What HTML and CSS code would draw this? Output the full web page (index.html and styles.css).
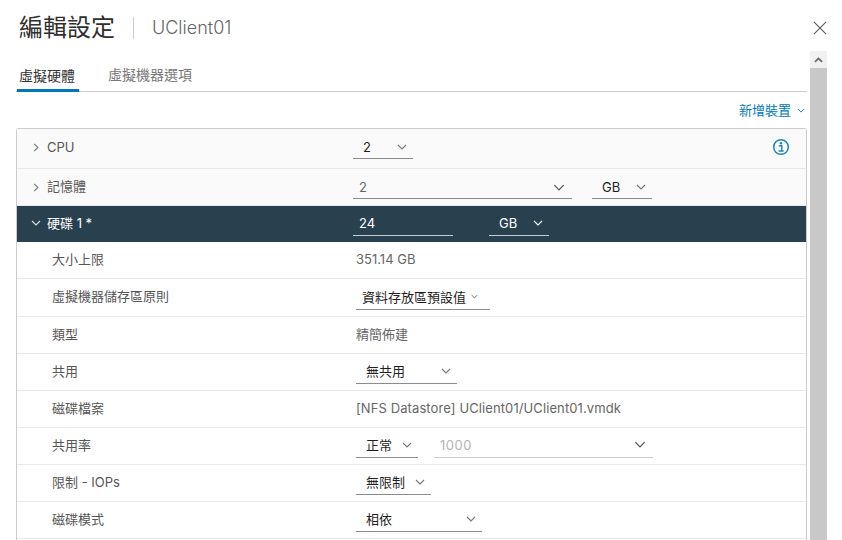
FILE: index.html
```html
<!DOCTYPE html>
<html lang="zh-Hant">
<head>
<meta charset="utf-8">
<title>編輯設定</title>
<link rel="stylesheet" href="styles.css">
</head>
<body>
<svg class="defs" width="0" height="0" aria-hidden="true">
  <symbol id="down" viewBox="0 0 10 6"><path d="M1 1l4 4 4-4" fill="none" stroke="currentColor" stroke-width="1.1"/></symbol>
  <symbol id="right" viewBox="0 0 6 10"><path d="M1 1l4 4-4 4" fill="none" stroke="currentColor" stroke-width="1.2"/></symbol>
</svg>
<div class="dialog">
  <main class="main">
    <header class="head">
      <h1 class="title">編輯設定</h1>
      <span class="subtitle">UClient01</span>
    </header>
    <nav class="tabs">
      <a class="tab active">虛擬硬體</a>
      <a class="tab">虛擬機器選項</a>
    </nav>
    <div class="add-row">
      <a class="add">新增裝置<svg class="chev-add"><use href="#down"/></svg></a>
    </div>
    <section class="table">
      <div class="row head-row first">
        <svg class="exp"><use href="#right"/></svg>
        <span class="hlabel">CPU</span>
        <div class="select w60"><span>2</span><svg class="chev"><use href="#down"/></svg></div>
        <svg class="info" viewBox="0 0 18 18">
          <circle cx="9" cy="9" r="7.3" fill="none" stroke="#1a86b8" stroke-width="1.5"/>
          <circle cx="9" cy="5.3" r="1.2" fill="#1a86b8"/>
          <path d="M6.8 7.8h3v5M6.6 13h5" fill="none" stroke="#1a86b8" stroke-width="1.4"/>
        </svg>
      </div>
      <div class="row head-row second">
        <svg class="exp"><use href="#right"/></svg>
        <span class="hlabel">記憶體</span>
        <div class="combo w219 raised"><span class="muted">2</span><svg class="chev big"><use href="#down"/></svg></div>
        <div class="select w60 gap20 raised"><span>GB</span><svg class="chev"><use href="#down"/></svg></div>
      </div>
      <div class="row dark-row">
        <svg class="exp-open"><use href="#down"/></svg>
        <span class="hlabel">硬碟 1 *</span>
        <div class="combo w100 light"><span>24</span></div>
        <div class="select w60 gap36 light"><span>GB</span><svg class="chev"><use href="#down"/></svg></div>
      </div>
      <div class="row sub"><span class="label">大小上限</span><span class="value">351.14 GB</span></div>
      <div class="row sub h38"><span class="label">虛擬機器儲存區原則</span>
        <div class="select w134 tight"><span>資料存放區預設值</span><svg class="chev small"><use href="#down"/></svg></div></div>
      <div class="row sub"><span class="label">類型</span><span class="value">精簡佈建</span></div>
      <div class="row sub"><span class="label">共用</span>
        <div class="select w101"><span>無共用</span><svg class="chev"><use href="#down"/></svg></div></div>
      <div class="row sub"><span class="label">磁碟檔案</span><span class="value path">[NFS Datastore] UClient01/UClient01.vmdk</span></div>
      <div class="row sub"><span class="label">共用率</span>
        <div class="select w62"><span>正常</span><svg class="chev"><use href="#down"/></svg></div>
        <div class="combo w219 gap16 disabled"><span class="num">1000</span><svg class="chev big"><use href="#down"/></svg></div></div>
      <div class="row sub"><span class="label">限制 - IOPs</span>
        <div class="select w75"><span>無限制</span><svg class="chev"><use href="#down"/></svg></div></div>
      <div class="row sub"><span class="label">磁碟模式</span>
        <div class="select w126"><span>相依</span><svg class="chev"><use href="#down"/></svg></div></div>
    </section>
  </main>
  <aside class="side">
    <svg class="close" viewBox="0 0 16 16"><path d="M1 1l14 14M15 1L1 15" fill="none" stroke="#565656" stroke-width="1.2"/></svg>
    <div class="scrollbar">
      <div class="sb-btn"><svg class="sb-up" viewBox="0 0 10 6"><path d="M1 5l4-3.6L9 5" fill="none" stroke="#6a6a6a" stroke-width="2"/></svg></div>
      <div class="sb-thumb"></div>
    </div>
  </aside>
</div>
</body>
</html>
```
FILE: styles.css
```css
* { box-sizing: border-box; }
html, body { margin: 0; height: 100%; overflow: hidden; background: #fff; }
body { font-family: Inter, "Noto Sans CJK TC", sans-serif; color: #565656; font-size: 13px; }
.defs { position: absolute; }
.dialog { display: flex; height: 540px; padding-left: 16px; }
.main { width: 791px; flex: none; }
.head { display: flex; align-items: center; height: 53px; padding: 2px 0 0 3px; }
.title { margin: 0; font-size: 24px; line-height: 32px; font-weight: 400; color: #2f2f2f; padding-right: 18px; border-right: 1px solid #ccc; height: 22px; display: flex; align-items: center; }
.subtitle { margin-left: 18px; font-size: 18px; font-weight: 300; color: #666; }
.tabs { display: flex; height: 39px; border-bottom: 1px solid #ccc; align-items: flex-end; padding-left: 1px; }
.tab { display: block; height: 25px; font-size: 14px; line-height: 18px; padding: 0 2px; color: #565656; }
.tab.active { width: 62px; border-bottom: 3px solid #0079b8; margin-bottom: -1px; color: #333; }
.tab + .tab { margin-left: 27px; color: #777; }
.add-row { display: flex; justify-content: flex-end; height: 36px; padding-top: 9px; }
.add { color: #0079b8; line-height: 18px; display: flex; align-items: center; height: 18px; }
.chev-add { width: 8px; height: 5px; margin: 0 2px 0 6px; color: #0079b8; }
.table { border: 1px solid #ccc; border-bottom: 0; border-radius: 3px 3px 0 0; height: 412px; }
.row { display: flex; align-items: center; border-bottom: 1px solid #e8e8e8; height: 37px; }
.head-row { background: #fafafa; padding-left: 16px; }
.head-row.first { height: 40px; }
.head-row.second { height: 37px; }
.dark-row { background: #29414f; color: #fff; height: 36px; padding-left: 14px; border-bottom: 0; }
.exp { width: 6px; height: 9px; color: #777; margin-right: 8px; flex: none; }
.first .exp { margin-bottom: 2px; }
.exp-open { width: 10px; height: 6px; color: #ddd; margin: 0 6px 2px 0; flex: none; }
.hlabel { width: 306px; flex: none; line-height: 18px; padding-bottom: 3px; }
.sub { padding-left: 35px; }
.h38 { height: 38px; }
.label { width: 304px; flex: none; color: #565656; line-height: 18px; padding-bottom: 3px; }
.value { color: #666; line-height: 18px; padding-bottom: 2px; }
.path { letter-spacing: 0.1px; }
.select, .combo { display: flex; align-items: center; justify-content: space-between; height: 23px; margin-top: 1px; padding-bottom: 3px; border-bottom: 1px solid #8c8c8c; flex: none; color: #1f1f1f; }
.first .select { margin-bottom: 3px; padding-bottom: 0; }
.select { padding-left: 10px; padding-right: 6px; }
.combo { padding-left: 6px; padding-right: 7px; }
.raised { padding-bottom: 0; }
.muted { color: #666; }
.light { color: #fff; border-bottom-color: #c4ccd1; }
.disabled { color: #b5b5b5; border-bottom-color: #ccc; }
.disabled .chev { color: #666; }
.num { letter-spacing: 0.5px; }
.chev { width: 10px; height: 6px; color: #777; flex: none; }
.chev.big { width: 12px; height: 7px; color: #565656; }
.chev.small { width: 7px; height: 5px; margin-left: 5px; color: #444; }
.tight { padding-left: 6px; justify-content: flex-start; }
.light .chev { color: #fff; }
.w60 { width: 60px; }
.w62 { width: 62px; }
.w75 { width: 75px; }
.w100 { width: 100px; }
.w101 { width: 101px; }
.w126 { width: 126px; }
.w134 { width: 134px; }
.w219 { width: 219px; }
.gap20 { margin-left: 20px; }
.gap36 { margin-left: 36px; }
.gap16 { margin-left: 16px; }
.info { width: 18px; height: 18px; margin: 0 16px 3px auto; }
.side { width: 35px; flex: none; display: flex; flex-direction: column; }
.close { width: 14px; height: 14px; margin: 21px 0 0 6px; flex: none; }
.scrollbar { width: 17px; margin: 16px 0 0 3px; flex: 1; background: #c8c8c8; }
.sb-btn { height: 17px; background: #f1f1f1; display: flex; align-items: center; justify-content: center; }
.sb-up { width: 9px; height: 6px; }
```
